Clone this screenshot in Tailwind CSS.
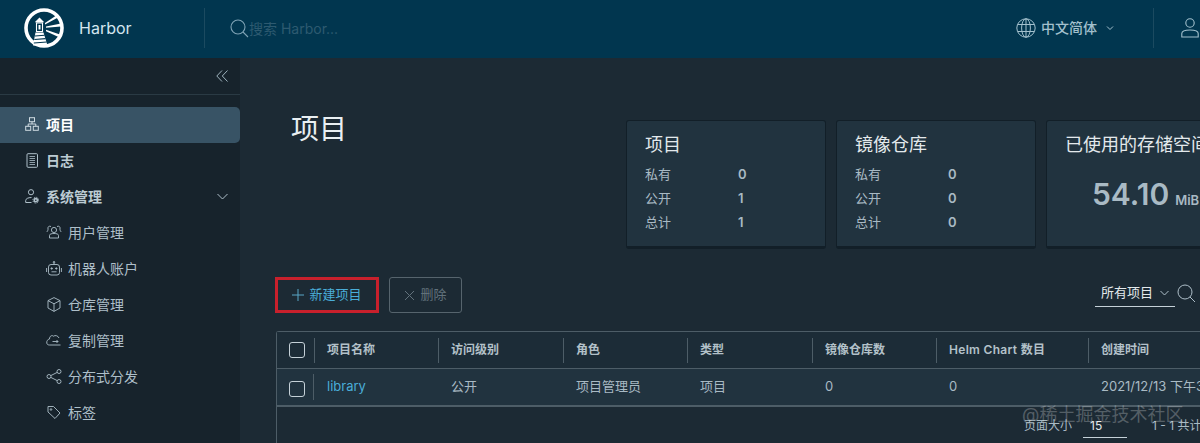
<!DOCTYPE html>
<html lang="zh-CN">
<head>
<meta charset="UTF-8">
<title>Harbor</title>
<script src="https://cdn.jsdelivr.net/npm/@tailwindcss/browser@4"></script>
</head>
<body class="w-[1200px] h-[443px] overflow-hidden bg-[#1c2a34] font-['Inter','Noto_Sans_CJK_SC',sans-serif]">
<div class="relative w-[1200px] h-[443px] overflow-hidden flex flex-col">
  <!-- header -->
  <header class="h-[58px] shrink-0 bg-[#01364f] flex items-center pb-[2px]">
    <div class="w-[205px] h-[40px] shrink-0 flex items-center pl-[24px] border-r border-[#1b4a60]">
      <svg class="w-[40px] h-[40px]" viewBox="0 0 40 40" fill="none">
        <circle cx="20" cy="20" r="18" stroke="#fff" stroke-width="3.6"/>
        <path d="M15.5 9.5 L19.5 13.5 V14.5 H11.5 V13.5Z" fill="#fff"/>
        <path d="M12.5 15 H18.5 V23.5 H12.5Z" stroke="#fff" stroke-width="1.1"/>
        <path d="M14.5 17 H16.5 V21.5 H14.5Z" fill="#fff"/>
        <path d="M11.5 24.5 H19.5 L23.5 37.5 H9Z" fill="#fff"/>
        <path d="M11 28 L20.6 27.2 M10.4 31.5 L21.6 30.6 M9.8 35 L22.7 34" stroke="#01364f" stroke-width="1.1"/>
        <path d="M21 15 L33 7 L34.5 9.2 L21 16.6Z M22 18.4 L37 15.6 V18.4 L22 19.8Z M22 21.8 L36 26.6 L35 29.2 L22 23.2Z" fill="#fff"/>
      </svg>
      <span class="ml-[15px] text-[16px] text-[#d4e6ef]">Harbor</span>
    </div>
    <div class="flex items-center pl-[24px] flex-1">
      <svg class="w-[20px] h-[20px] text-[#7fa3b5]" viewBox="0 0 20 20" fill="none" stroke="currentColor" stroke-width="1.1">
        <circle cx="9" cy="9" r="7"/><path d="M14 14 L19 19"/>
      </svg>
      <span class="text-[14px] text-[#2d5a70]">搜索 Harbor...</span>
    </div>
    <div class="flex items-center w-[137px] shrink-0">
      <svg class="w-[20px] h-[20px] text-[#a3c0cd]" viewBox="0 0 20 20" fill="none" stroke="currentColor" stroke-width="1">
        <circle cx="10" cy="10" r="9.2"/><ellipse cx="10" cy="10" rx="4.4" ry="9.2"/><path d="M10 .8 V19.2 M1.6 6.5 H18.4 M1.6 13.5 H18.4"/>
      </svg>
      <span class="ml-[5px] pb-[2px] text-[14px] font-medium text-[#a3c0cd]">中文简体</span>
      <svg class="ml-[9px] w-[8px] h-[8px] text-[#a3c0cd]" viewBox="0 0 8 8" fill="none" stroke="currentColor"><path d="M1 2.5 L4 5.5 L7 2.5"/></svg>
    </div>
    <div class="w-[47px] h-[40px] shrink-0 border-l border-[#1b4a60] flex items-center pl-[27px]">
      <svg class="w-[18px] h-[20px] shrink-0 text-[#a3c0cd]" viewBox="0 0 18 20" fill="none" stroke="currentColor" stroke-width="1.1">
        <circle cx="9" cy="5" r="4.2"/><path d="M.8 19 V15.5 C.8 13.5 4 12 9 12 C14 12 17.2 13.5 17.2 15.5 V19Z"/>
      </svg>
    </div>
  </header>

  <div class="flex-1 flex min-h-0">
    <!-- sidebar -->
    <aside class="w-[240px] shrink-0 bg-[#17232c] flex flex-col">
      <div class="h-[37px] shrink-0 border-b border-[#2a3a44] flex items-center justify-end pr-[12px]">
        <svg class="w-[12px] h-[12px] text-[#9fb4bf]" viewBox="0 0 12 12" fill="none" stroke="currentColor"><path d="M6 .5 L.8 6 L6 11.5 M11.5 .5 L6.3 6 L11.5 11.5"/></svg>
      </div>
      <nav class="pt-[12px] flex flex-col">
        <a class="h-[36px] flex items-center pl-[25px] pb-[2px] bg-[#385365] rounded-r-[5px] text-[14px] font-bold text-white">
          <svg class="w-[14px] h-[14px] mr-[7px] text-[#cfdbe2]" viewBox="0 0 14 14" fill="none" stroke="currentColor"><rect x="4.5" y=".7" width="5" height="4"/><rect x=".7" y="9.3" width="5" height="4"/><rect x="8.3" y="9.3" width="5" height="4"/><path d="M7 4.7 V7 M3.2 9.3 V7 H10.8 V9.3"/></svg>
          项目
        </a>
        <a class="h-[36px] flex items-center pl-[25px] pb-[2px] text-[14px] font-bold text-[#bccbd3]">
          <svg class="w-[14px] h-[15px] mr-[7px] text-[#aebfc9]" viewBox="0 0 14 15" fill="none" stroke="currentColor"><rect x="2" y=".7" width="10.5" height="13.6" rx="1"/><path d="M4.5 3.5 H10 M4.5 5.5 H10 M4.5 7.5 H10 M4.5 9.5 H10 M4.5 11.5 H10" stroke-width=".8"/></svg>
          日志
        </a>
        <a class="h-[36px] flex items-center pl-[25px] pr-[12px] pb-[2px] text-[14px] font-bold text-[#bccbd3]">
          <svg class="w-[14px] h-[15px] mr-[7px] text-[#aebfc9]" viewBox="0 0 14 15" fill="none" stroke="currentColor"><circle cx="6" cy="3.2" r="2.6"/><path d="M.7 13.5 V11.5 C.7 9.8 3 8.5 6.5 8.5 M.7 13.5 H6.5"/><circle cx="10.8" cy="11.2" r="1.6" stroke-width="1.6"/><circle cx="10.8" cy="11.2" r="2.9" stroke-width="1" stroke-dasharray="1.2 1.1"/></svg>
          系统管理
          <svg class="ml-auto w-[11px] h-[7px] text-[#aebfc9]" viewBox="0 0 11 7" fill="none" stroke="currentColor"><path d="M.5 1 L5.5 6 L10.5 1"/></svg>
        </a>
        <a class="h-[36px] flex items-center pl-[46px] pb-[2px] text-[14px] text-[#aebfc9]">
          <svg class="w-[16px] h-[14px] mr-[6px]" viewBox="0 0 16 14" fill="none" stroke="currentColor" stroke-width=".9"><circle cx="8" cy="5" r="2.6"/><path d="M3.5 13 V10.5 C3.5 9 5.5 8.5 8 8.5 C10.5 8.5 12.5 9 12.5 10.5 V13Z"/><path d="M5 1.5 C3 .5 1.5 2 2 4 C2.2 5 1.5 6 .8 7 M11 1.5 C13 .5 14.5 2 14 4 C13.8 5 14.5 6 15.2 7"/></svg>
          用户管理
        </a>
        <a class="h-[36px] flex items-center pl-[46px] pb-[2px] text-[14px] text-[#aebfc9]">
          <svg class="w-[16px] h-[15px] mr-[6px]" viewBox="0 0 16 15" fill="none" stroke="currentColor" stroke-width=".9"><rect x="2.5" y="3.5" width="11" height="10.5" rx="2.5"/><path d="M8 3.5 V1.5 M.6 7 V11 M15.4 7 V11 M5.5 10.8 H10.5"/><circle cx="8" cy="1.2" r=".8"/><circle cx="5.7" cy="7.5" r=".7" fill="currentColor"/><circle cx="10.3" cy="7.5" r=".7" fill="currentColor"/></svg>
          机器人账户
        </a>
        <a class="h-[36px] flex items-center pl-[46px] pb-[2px] text-[14px] text-[#aebfc9]">
          <svg class="w-[16px] h-[15px] mr-[6px]" viewBox="0 0 16 15" fill="none" stroke="currentColor" stroke-width=".9"><path d="M8 .6 L14 3.6 V11 L8 14.4 L2 11 V3.6Z M2 3.6 L8 6.8 L14 3.6 M8 6.8 V14.4"/></svg>
          仓库管理
        </a>
        <a class="h-[36px] flex items-center pl-[46px] pb-[2px] text-[14px] text-[#aebfc9]">
          <svg class="w-[16px] h-[12px] mr-[6px]" viewBox="0 0 16 12" fill="none" stroke="currentColor" stroke-width=".9"><path d="M13 4 C12 1.5 9 1 7.5 2.2 C6 .8 3.5 2 3.5 5 C1.5 5.5 .5 7 .8 9 C1 10.5 2 11 3.5 11 H14.5"/><path d="M6.5 7.5 H12 M10.5 6 L12 7.5 L10.5 9"/></svg>
          复制管理
        </a>
        <a class="h-[36px] flex items-center pl-[46px] pb-[2px] text-[14px] text-[#aebfc9]">
          <svg class="w-[16px] h-[15px] mr-[6px]" viewBox="0 0 16 15" fill="none" stroke="currentColor" stroke-width=".9"><circle cx="3" cy="7.5" r="2"/><circle cx="13" cy="2.5" r="2"/><circle cx="13" cy="12.5" r="2"/><path d="M4.8 6.6 L11.2 3.4 M4.8 8.4 L11.2 11.6"/></svg>
          分布式分发
        </a>
        <a class="h-[36px] flex items-center pl-[46px] pb-[2px] text-[14px] text-[#aebfc9]">
          <svg class="w-[16px] h-[15px] mr-[6px]" viewBox="0 0 16 15" fill="none" stroke="currentColor" stroke-width=".9"><path d="M2 1.5 H7.5 L14 8 L9 13.5 L2 7Z"/><circle cx="5" cy="4.5" r=".8"/></svg>
          标签
        </a>
      </nav>
    </aside>

    <!-- main -->
    <main class="flex-1 min-w-0 pl-[36px] overflow-hidden">
      <div class="flex h-[190px] w-[1000px]">
        <h1 class="w-[350px] shrink-0 pl-[15px] pt-[50px] text-[28px] leading-[42px] font-normal text-[#e9eff2]">项目</h1>
        <div class="flex gap-[10px] pt-[62px]">
          <section class="w-[200px] h-[129px] rounded-[3px] bg-[#21333f] border border-b-[3px] border-[#121f28] pl-[18px] pt-[11px]">
            <h3 class="text-[18px] leading-[26px] text-[#e3e9ec] mb-[4px]">项目</h3>
            <div class="flex text-[13px] leading-[24px] text-[#a9bac4]"><span class="w-[93px]">私有</span><span class="font-semibold">0</span></div>
            <div class="flex text-[13px] leading-[24px] text-[#a9bac4]"><span class="w-[93px]">公开</span><span class="font-semibold">1</span></div>
            <div class="flex text-[13px] leading-[24px] text-[#a9bac4]"><span class="w-[93px]">总计</span><span class="font-semibold">1</span></div>
          </section>
          <section class="w-[200px] h-[129px] rounded-[3px] bg-[#21333f] border border-b-[3px] border-[#121f28] pl-[18px] pt-[11px]">
            <h3 class="text-[18px] leading-[26px] text-[#e3e9ec] mb-[4px]">镜像仓库</h3>
            <div class="flex text-[13px] leading-[24px] text-[#a9bac4]"><span class="w-[93px]">私有</span><span class="font-semibold">0</span></div>
            <div class="flex text-[13px] leading-[24px] text-[#a9bac4]"><span class="w-[93px]">公开</span><span class="font-semibold">0</span></div>
            <div class="flex text-[13px] leading-[24px] text-[#a9bac4]"><span class="w-[93px]">总计</span><span class="font-semibold">0</span></div>
          </section>
          <section class="w-[200px] h-[129px] rounded-[3px] bg-[#21333f] border border-b-[3px] border-[#121f28] pl-[18px] pt-[11px]">
            <h3 class="text-[18px] leading-[26px] text-[#e3e9ec] whitespace-nowrap">已使用的存储空间</h3>
            <div class="pl-[27px] pt-[14px] flex items-baseline text-[#a9bac4]"><span class="text-[30px] leading-[44px] font-semibold">54.10</span><span class="ml-[6px] text-[13px] font-semibold">MiB</span></div>
          </section>
        </div>
      </div>
      <div class="h-[83px] w-[920px] flex items-start pt-[29px]">
        <button class="w-[104px] h-[36px] border-[3px] border-[#c8202c] flex items-center justify-center gap-[5px] text-[13px] text-[#4aaed9] -ml-[1px]">
          <svg class="w-[12px] h-[12px]" viewBox="0 0 12 12" fill="none" stroke="#58a6c6"><path d="M6 0 V12 M0 6 H12"/></svg>
          新建项目
        </button>
        <button class="ml-[10px] w-[73px] h-[36px] rounded-[3px] border border-[#56646d] flex items-center justify-center gap-[5px] text-[13px] text-[#62727c]">
          <svg class="w-[11px] h-[11px]" viewBox="0 0 11 11" fill="none" stroke="#62727c"><path d="M1 1 L10 10 M10 1 L1 10"/></svg>
          删除
        </button>
        <div class="ml-auto flex items-start pt-[1px]">
          <div class="w-[80px] h-[29px] border-b border-[#c5d1d8] flex items-center pl-[6px] pt-[2px] text-[13px] text-[#e3e9ec]">所有项目
            <svg class="ml-[7px] w-[9px] h-[6px]" viewBox="0 0 9 6" fill="none" stroke="#aebfc9"><path d="M.5 1 L4.5 5 L8.5 1"/></svg>
          </div>
          <svg class="ml-[2px] mt-[6px] w-[19px] h-[19px]" viewBox="0 0 19 19" fill="none" stroke="#aebfc9"><circle cx="8" cy="8" r="7"/><path d="M13 13 L18 18"/></svg>
        </div>
      </div>
      <!-- table -->
      <div class="w-[1000px] h-[120px] border-t border-l border-[#4d5d67] rounded-tl-[3px]">
        <div class="h-[37px] flex items-center bg-[#1c2c37] border-b border-[#4d5d67] text-[12px] font-semibold text-[#b3c1c9]">
          <div class="w-[38px] shrink-0 h-[25px] flex items-center pl-[12px] border-r border-[#4d5d67]"><span class="block w-[16px] h-[16px] rounded-[3px] border border-[#c5d1d8]"></span></div>
          <div class="w-[124px] shrink-0 h-[25px] flex items-center pl-[12px] border-r border-[#4d5d67]">项目名称</div>
          <div class="w-[125px] shrink-0 h-[25px] flex items-center pl-[12px] border-r border-[#4d5d67]">访问级别</div>
          <div class="w-[124px] shrink-0 h-[25px] flex items-center pl-[12px] border-r border-[#4d5d67]">角色</div>
          <div class="w-[125px] shrink-0 h-[25px] flex items-center pl-[12px] border-r border-[#4d5d67]">类型</div>
          <div class="w-[124px] shrink-0 h-[25px] flex items-center pl-[12px] border-r border-[#4d5d67]">镜像仓库数</div>
          <div class="w-[152px] shrink-0 h-[25px] flex items-center pl-[12px] border-r border-[#4d5d67] tracking-[.3px]">Helm Chart 数目</div>
          <div class="flex-1 h-[25px] flex items-center pl-[12px]">创建时间</div>
        </div>
        <div class="h-[38px] flex items-center bg-[#21333f] border-b-2 border-[#4d5d67] text-[13px] text-[#a9bac4]">
          <div class="w-[37px] shrink-0 h-[26px] flex items-center pl-[12px] border-r border-[#4d5d67]"><span class="block w-[16px] h-[16px] mt-[4px] rounded-[3px] border border-[#c5d1d8]"></span></div>
          <div class="w-[125px] shrink-0 pl-[13px] text-[#4aaed9]">library</div>
          <div class="w-[125px] shrink-0 pl-[12px]">公开</div>
          <div class="w-[124px] shrink-0 pl-[12px]">项目管理员</div>
          <div class="w-[125px] shrink-0 pl-[12px]">项目</div>
          <div class="w-[124px] shrink-0 pl-[12px]">0</div>
          <div class="w-[152px] shrink-0 pl-[12px]">0</div>
          <div class="flex-1 pl-[12px] whitespace-nowrap">2021/12/13 下午3:20</div>
        </div>
        <div class="h-[37px] flex items-center pl-[747px] text-[12px] text-[#a9bac4]">
          <span>页面大小</span>
          <span class="ml-[11px] w-[44px] h-[25px] pl-[7px] pt-[4px] border-b border-[#c5d1d8] text-[#e3e9ec]">15</span>
          <span class="ml-[25px] whitespace-nowrap">1 - 1 共计 1 条记录</span>
        </div>
      </div>
    </main>
  </div>
  <!-- watermark -->
  <div class="absolute left-[1022px] top-[403px] text-[18px] leading-[24px] whitespace-nowrap text-white/25">@稀土掘金技术社区</div>
</div>
</body>
</html>
